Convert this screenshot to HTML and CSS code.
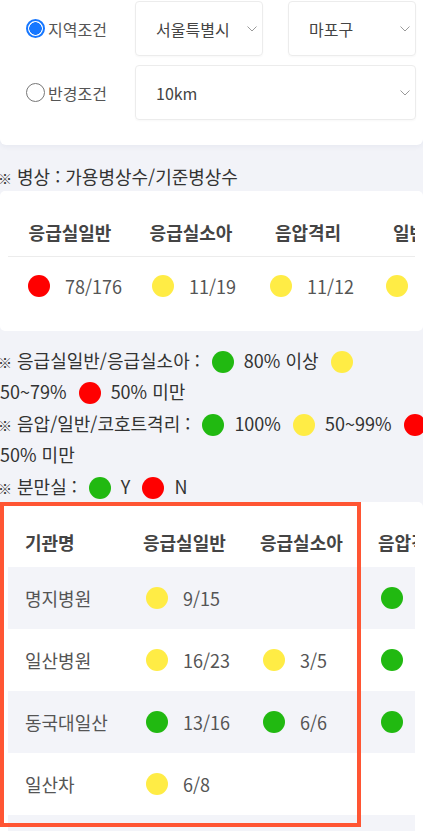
FILE: index.html
```html
<!DOCTYPE html>
<html lang="ko">
<head>
<meta charset="utf-8">
<title>병상 현황</title>
<link rel="stylesheet" href="styles.css">
</head>
<body>
<section class="filter">
  <div class="frow">
    <label class="opt"><span class="radio on"></span><span>지역조건</span></label>
    <div class="sel w1"><span>서울특별시</span><svg class="chev" viewBox="0 0 10 6"><polyline points="0.5,0.5 5,5 9.5,0.5"/></svg></div>
    <div class="sel w1 gap"><span>마포구</span><svg class="chev" viewBox="0 0 10 6"><polyline points="0.5,0.5 5,5 9.5,0.5"/></svg></div>
  </div>
  <div class="frow r2">
    <label class="opt"><span class="radio"></span><span>반경조건</span></label>
    <div class="sel wide"><span>10km</span><svg class="chev" viewBox="0 0 10 6"><polyline points="0.5,0.5 5,5 9.5,0.5"/></svg></div>
  </div>
</section>

<p class="note title"><span class="mark">※</span> 병상 : 가용병상수/기준병상수</p>

<section class="card beds">
  <div class="scroll">
    <div class="bgrid">
      <div class="bh">응급실일반</div>
      <div class="bh">응급실소아</div>
      <div class="bh">음압격리</div>
      <div class="bh">일반격리</div>
      <div class="bd"><i class="dot red"></i>78/176</div>
      <div class="bd"><i class="dot yellow"></i>11/19</div>
      <div class="bd"><i class="dot yellow"></i>11/12</div>
      <div class="bd"><i class="dot yellow"></i>2/3</div>
    </div>
  </div>
</section>

<div class="legend">
  <p><span class="mark">※</span> 응급실일반/응급실소아 : <i class="dot green"></i> 80% 이상 <i class="dot yellow"></i><br>50~79% <i class="dot red"></i> 50% 미만</p>
  <p><span class="mark">※</span> 음압/일반/코호트격리 : <i class="dot green"></i> 100% <i class="dot yellow"></i> 50~99% <i class="dot red"></i><br>50% 미만</p>
  <p><span class="mark">※</span> 분만실 : <i class="dot green"></i> Y <i class="dot red"></i> N</p>
</div>

<section class="card hosp">
  <div class="scroll">
    <div class="tgrid">
      <div class="th">기관명</div>
      <div class="th">응급실일반</div>
      <div class="th">응급실소아</div>
      <div class="th">음압격리</div>

      <div class="tr alt">
        <div class="td">명지병원</div>
        <div class="td"><i class="dot yellow"></i>9/15</div>
        <div class="td"></div>
        <div class="td"><i class="dot green"></i></div>
      </div>
      <div class="tr">
        <div class="td">일산병원</div>
        <div class="td"><i class="dot yellow"></i>16/23</div>
        <div class="td"><i class="dot yellow"></i>3/5</div>
        <div class="td"><i class="dot green"></i></div>
      </div>
      <div class="tr alt">
        <div class="td">동국대일산</div>
        <div class="td"><i class="dot green"></i>13/16</div>
        <div class="td"><i class="dot green"></i>6/6</div>
        <div class="td"><i class="dot green"></i></div>
      </div>
      <div class="tr">
        <div class="td">일산차</div>
        <div class="td"><i class="dot yellow"></i>6/8</div>
        <div class="td"></div>
        <div class="td"></div>
      </div>
      <div class="tr alt">
        <div class="td"></div>
        <div class="td"></div>
        <div class="td"></div>
        <div class="td"></div>
      </div>
    </div>
  </div>
  <div class="highlight"></div>
</section>
</body>
</html>
```

FILE: styles.css
```css
* { box-sizing: border-box; }

html, body {
  margin: 0;
  padding: 0;
}

body {
  background: #f2f3f8;
  font-family: "Noto Sans CJK KR", "Noto Sans", sans-serif;
  color: #333;
  width: 423px;
  height: 831px;
  overflow: hidden;
}

p { margin: 0; }

/* ---------- filter ---------- */
.filter {
  background: #fff;
  height: 145px;
  padding-top: 1px;
  border-radius: 0 0 6px 6px;
  box-shadow: 0 2px 5px rgba(40, 50, 120, 0.05);
}

.frow {
  display: flex;
  align-items: center;
  height: 55px;
}

.frow.r2 { margin-top: 9px; }

.opt {
  width: 135px;
  display: flex;
  align-items: center;
  gap: 3px;
  padding-left: 26px;
  font-size: 16px;
  color: #555;
}

.radio {
  width: 19px;
  height: 19px;
  border-radius: 50%;
  border: 1.5px solid #777;
  background: #fff;
  flex: none;
}

.radio.on {
  border: 2px solid #1677ff;
  background: radial-gradient(circle, #1677ff 0 6px, #fff 6.5px);
}

.sel {
  height: 55px;
  border: 1px solid #ececec;
  border-radius: 4px;
  box-shadow: 0 1px 2px rgba(0, 0, 0, 0.03);
  display: flex;
  align-items: center;
  justify-content: space-between;
  padding: 0 5px 0 20px;
  font-size: 16px;
  color: #444;
}

.sel.w1 { width: 128px; }
.sel.gap { margin-left: 25px; }
.sel.wide { width: 281px; }

.chev {
  width: 10px;
  height: 6px;
  fill: none;
  stroke: #9a9a9a;
  stroke-width: 1;
}

/* ---------- notes ---------- */
.mark {
  font-size: 14px;
  line-height: 1;
  margin-left: -2px;
}

.note {
  font-size: 18px;
  line-height: 26px;
  color: #333;
}

.title { padding-top: 18px; padding-bottom: 2px; }

.legend {
  margin-top: 14px;
  font-size: 18px;
  line-height: 31px;
  color: #333;
  white-space: nowrap;
}

.legend p + p { margin-top: 1px; }

.dot {
  display: inline-block;
  width: 22px;
  height: 22px;
  border-radius: 50%;
  vertical-align: middle;
  margin: -3px 5px 0 7px;
}

.red { background: #ff0000; }
.yellow { background: #ffec45; }
.green { background: #21b911; }

/* ---------- cards ---------- */
.card {
  background: #fff;
  border-radius: 5px;
  position: relative;
}

.scroll {
  margin: 0 8px;
  overflow: hidden;
}

.beds { padding-bottom: 16px; }

.bgrid {
  display: grid;
  grid-template-columns: 124px 118px 116px 120px;
  width: max-content;
}

.bh {
  height: 66px;
  padding-top: 16px;
  display: flex;
  align-items: center;
  justify-content: center;
  font-size: 18px;
  font-weight: 700;
  color: #444;
  border-bottom: 1px solid #ececec;
}

.bd {
  height: 58px;
  display: flex;
  align-items: center;
  padding-left: 20px;
  font-size: 18px;
  color: #555;
}

.bd .dot { margin: 0 15px 0 0; }

/* hospital table */
.hosp { padding-top: 14px; }

.tgrid {
  display: grid;
  grid-template-columns: 118px 117px 118px 118px;
  width: max-content;
}

.th {
  height: 51px;
  display: flex;
  align-items: center;
  padding-left: 17px;
  font-size: 18px;
  font-weight: 700;
  color: #444;
}

.tr { display: contents; }

.td {
  height: 62px;
  display: flex;
  align-items: center;
  padding-left: 17px;
  font-size: 18px;
  color: #555;
}

.tr.alt .td { background: #f3f4f9; }

.td .dot { margin: 0 15px 0 3px; }

.highlight {
  position: absolute;
  left: 0;
  top: 0;
  width: 361px;
  height: 325px;
  border: 4px solid #ff5533;
  pointer-events: none;
}
```
